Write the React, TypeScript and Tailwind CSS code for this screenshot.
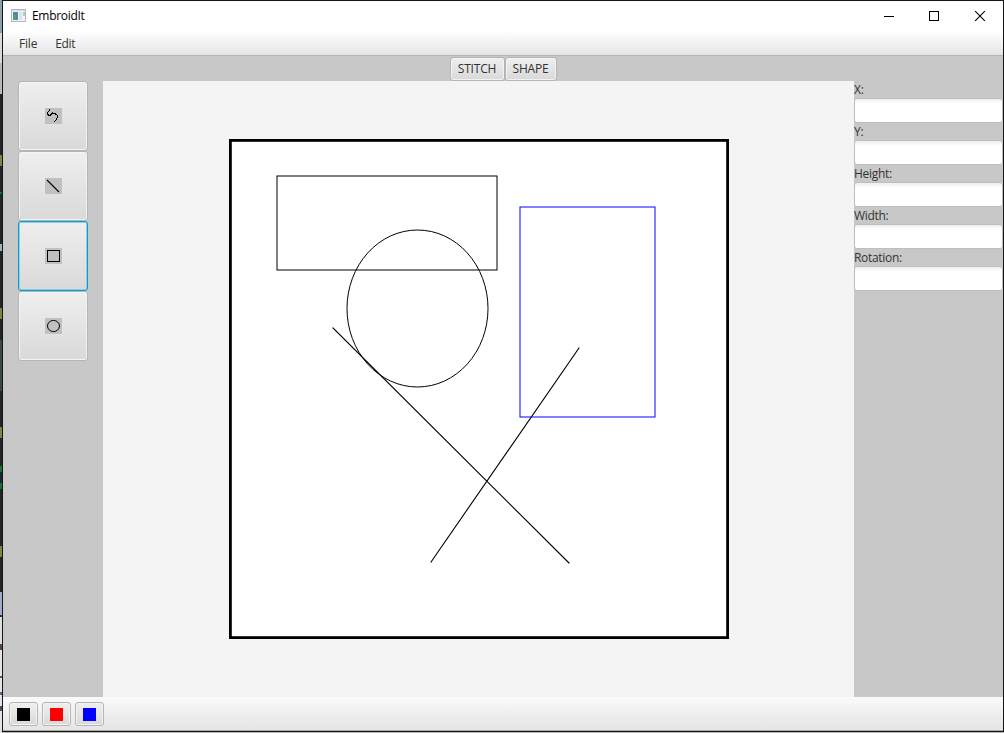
import React from "react";

const fields = ["X:", "Y:", "Height:", "Width:", "Rotation:"];

const tools = [
  {
    name: "curve",
    icon: (
      <path
        fill="#000"
        stroke="none"
        shapeRendering="crispEdges"
        d="M4 1h1v2h-1zM3 3h1v1h-1zM2 4h1v3h-1zM3 7h3v1h-3zM2 6h2v1h-2zM5 6h2v1h-2zM6 5h5v1h-5zM7 4h1v1h-1zM10 6h2v1h-2zM12 7h1v3h-1zM11 10h1v2h-1zM10 12h1v1h-1zM9 13h1v1h-1z"
      />
    ),
  },
  { name: "line", icon: <path d="M2 2L14 14" strokeWidth="1.1" /> },
  { name: "rectangle", icon: <rect x="2.5" y="2.5" width="12" height="11" /> },
  { name: "ellipse", icon: <ellipse cx="8.5" cy="8" rx="6" ry="5.6" /> },
];

const strip = [
  { h: "h-[33px]", c: "bg-[#8fa0ad]" },
  { h: "h-[30px]", c: "bg-[#d5dadd]" },
  { h: "h-[31px]", c: "bg-[#b9b9b8]" },
  { h: "h-[61px]", c: "bg-[#20262b]" },
  { h: "h-[11px]", c: "bg-[#85823a]" },
  { h: "h-[26px]", c: "bg-[#20262b]" },
  { h: "h-[2px]", c: "bg-[#087a2b]" },
  { h: "h-[50px]", c: "bg-[#20262b]" },
  { h: "h-[7px]", c: "bg-[#a0b4bc]" },
  { h: "h-[57px]", c: "bg-[#20262b]" },
  { h: "h-[11px]", c: "bg-[#85823a]" },
  { h: "h-[21px]", c: "bg-[#20262b]" },
  { h: "h-[51px]", c: "bg-[#3b484b]" },
  { h: "h-[36px]", c: "bg-[#20262b]" },
  { h: "h-[11px]", c: "bg-[#85823a]" },
  { h: "h-[28px]", c: "bg-[#20262b]" },
  { h: "h-[6px]", c: "bg-[#087a2b]" },
  { h: "h-[11px]", c: "bg-[#20262b]" },
  { h: "h-[6px]", c: "bg-[#087a2b]" },
  { h: "h-[57px]", c: "bg-[#20262b]" },
  { h: "h-[11px]", c: "bg-[#85823a]" },
  { h: "h-[35px]", c: "bg-[#20262b]" },
  { h: "h-[23px]", c: "bg-[#9eafca]" },
  { h: "h-[2px]", c: "bg-[#30302f]" },
  { h: "h-[27px]", c: "bg-[#dedede]" },
  { h: "h-[6px]", c: "bg-[#5c4150]" },
  { h: "h-[26px]", c: "bg-[#e4e4e4]" },
  { h: "h-[2px]", c: "bg-[#695941]" },
  { h: "h-[14px]", c: "bg-[#e4e4e4]" },
  { h: "h-[3px]", c: "bg-[#47699c]" },
  { h: "h-[11px]", c: "bg-[#e4e4e4]" },
  { h: "h-[5px]", c: "bg-[#40516b]" },
  { h: "h-[23px]", c: "bg-[#e4e4e4]" },
];

const face =
  "rounded-[3px] border border-[#b5b5b5] bg-linear-to-b from-[#efefef] to-[#d9d9d9] shadow-[inset_0_0_0_1px_#f3f3f3]";

export default function App() {
  return (
    <div className="flex h-[733px] w-[1004px] overflow-hidden bg-[#b5b5b5] font-['Open_Sans','Noto_Sans',sans-serif] text-[12px] leading-4 text-[#333]">
      <div className="flex w-[2px] flex-col">
        {strip.map((s, i) => (
          <div key={i} className={`${s.h} ${s.c} shrink-0`} />
        ))}
      </div>
      <div className="flex h-[732px] w-[1002px] flex-col border border-[#151515] bg-white">
        <header className="flex h-[30px] shrink-0 items-center text-black">
          <svg className="-mt-[2px] ml-[8px] h-[13px] w-[15px]" viewBox="0 0 15 13" shapeRendering="crispEdges">
            <rect x=".5" y=".5" width="14" height="12" fill="#f3f3f3" stroke="#b4b8bc" />
            <rect x="1" y="1" width="13" height="1" fill="#d3d8dc" />
            <rect x="2" y="3" width="5" height="8" fill="#4c8ca0" />
            <rect x="2" y="6" width="3" height="5" fill="#4f9b86" />
            <rect x="8" y="3" width="3" height="8" fill="#e1e1e3" />
            <rect x="12" y="3" width="2" height="4" fill="#a9cfbd" />
          </svg>
          <span className="ml-[6px] tracking-[-0.3px]">EmbroidIt</span>
          <svg className="ml-auto mr-[17px] h-[12px] w-[102px]" viewBox="0 0 102 12" fill="none" stroke="#000">
            <path d="M0 6.5h10M45.5 1.5h9v9h-9z" shapeRendering="crispEdges" />
            <path d="M91.2 1.2l9.6 9.6M100.8 1.2l-9.6 9.6" strokeWidth="1.1" />
          </svg>
        </header>
        <nav className="flex h-[25px] shrink-0 items-center gap-[18px] border-b border-[#b5b5b5] bg-linear-to-b from-white to-[#e5e5e5] pl-[16px] pt-[2px]">
          <span className="tracking-[-0.2px]">File</span>
          <span className="tracking-[-0.3px]">Edit</span>
        </nav>
        <div className="flex h-[25px] shrink-0 justify-center bg-[#c8c8c8] pt-px">
          <button className={`${face} h-[24px] w-[55px] tracking-[-0.2px]`}>STITCH</button>
          <button className={`${face} h-[24px] w-[52px] tracking-[-0.2px]`}>SHAPE</button>
        </div>
        <main className="flex h-[616px] shrink-0">
          <aside className="flex w-[100px] flex-col items-center bg-[#c8c8c8]">
            {tools.map((t) => (
              <button
                key={t.name}
                aria-label={t.name}
                className={`flex h-[70px] w-[70px] shrink-0 items-center justify-center rounded-[3px] border bg-linear-to-b from-[#efefef] to-[#d9d9d9] ${
                  t.name === "rectangle"
                    ? "border-[#039ed3] shadow-[inset_0_0_0_1px_#8fcfe5]"
                    : "border-[#b5b5b5] shadow-[inset_0_0_0_1px_#f3f3f3]"
                }`}
              >
                <svg className="h-[16px] w-[17px] bg-[#c0c0c0]" viewBox="0 0 17 16" fill="none" stroke="#000">
                  {t.icon}
                </svg>
              </button>
            ))}
          </aside>
          <section className="flex w-[751px] justify-center bg-[#f4f4f4] pt-[58px]">
            <svg className="h-[500px] w-[500px]" viewBox="229 139 500 500" fill="none" stroke="#000">
              <rect x="230.4" y="140.4" width="497.2" height="497.2" fill="#fff" strokeWidth="2.8" />
              <rect x="277" y="176" width="220" height="94" />
              <ellipse cx="417.5" cy="308.5" rx="70.5" ry="78.5" />
              <path d="M333 328L569 563M579 348L431 562" strokeWidth="1.1" strokeLinecap="square" />
              <rect x="520" y="207" width="135" height="210" stroke="#00f" />
            </svg>
          </section>
          <aside className="w-[149px] bg-[#c8c8c8]">
            {fields.map((label) => (
              <label key={label} className="flex h-[42px] flex-col">
                <span className="h-[17px] leading-[17px] tracking-[-0.3px]">{label}</span>
                <input className="h-[25px] w-[149px] rounded-[3px] border border-[#bebebe] bg-white bg-linear-to-b from-[#eee] to-white to-20% outline-none" />
              </label>
            ))}
          </aside>
        </main>
        <footer className="flex h-[34px] shrink-0 gap-[4px] border-b border-[#aaa] bg-linear-to-b from-[#fafafa] to-[#e4e4e4] pl-[6px] pt-[5px]">
          <button aria-label="black" className={`${face} flex h-[24px] w-[29px] items-center justify-center`}>
            <span className="h-[13px] w-[13px] bg-black" />
          </button>
          <button aria-label="red" className={`${face} flex h-[24px] w-[29px] items-center justify-center`}>
            <span className="h-[13px] w-[13px] bg-[#f00]" />
          </button>
          <button aria-label="blue" className={`${face} flex h-[24px] w-[29px] items-center justify-center`}>
            <span className="h-[13px] w-[13px] bg-[#00f]" />
          </button>
        </footer>
      </div>
    </div>
  );
}
